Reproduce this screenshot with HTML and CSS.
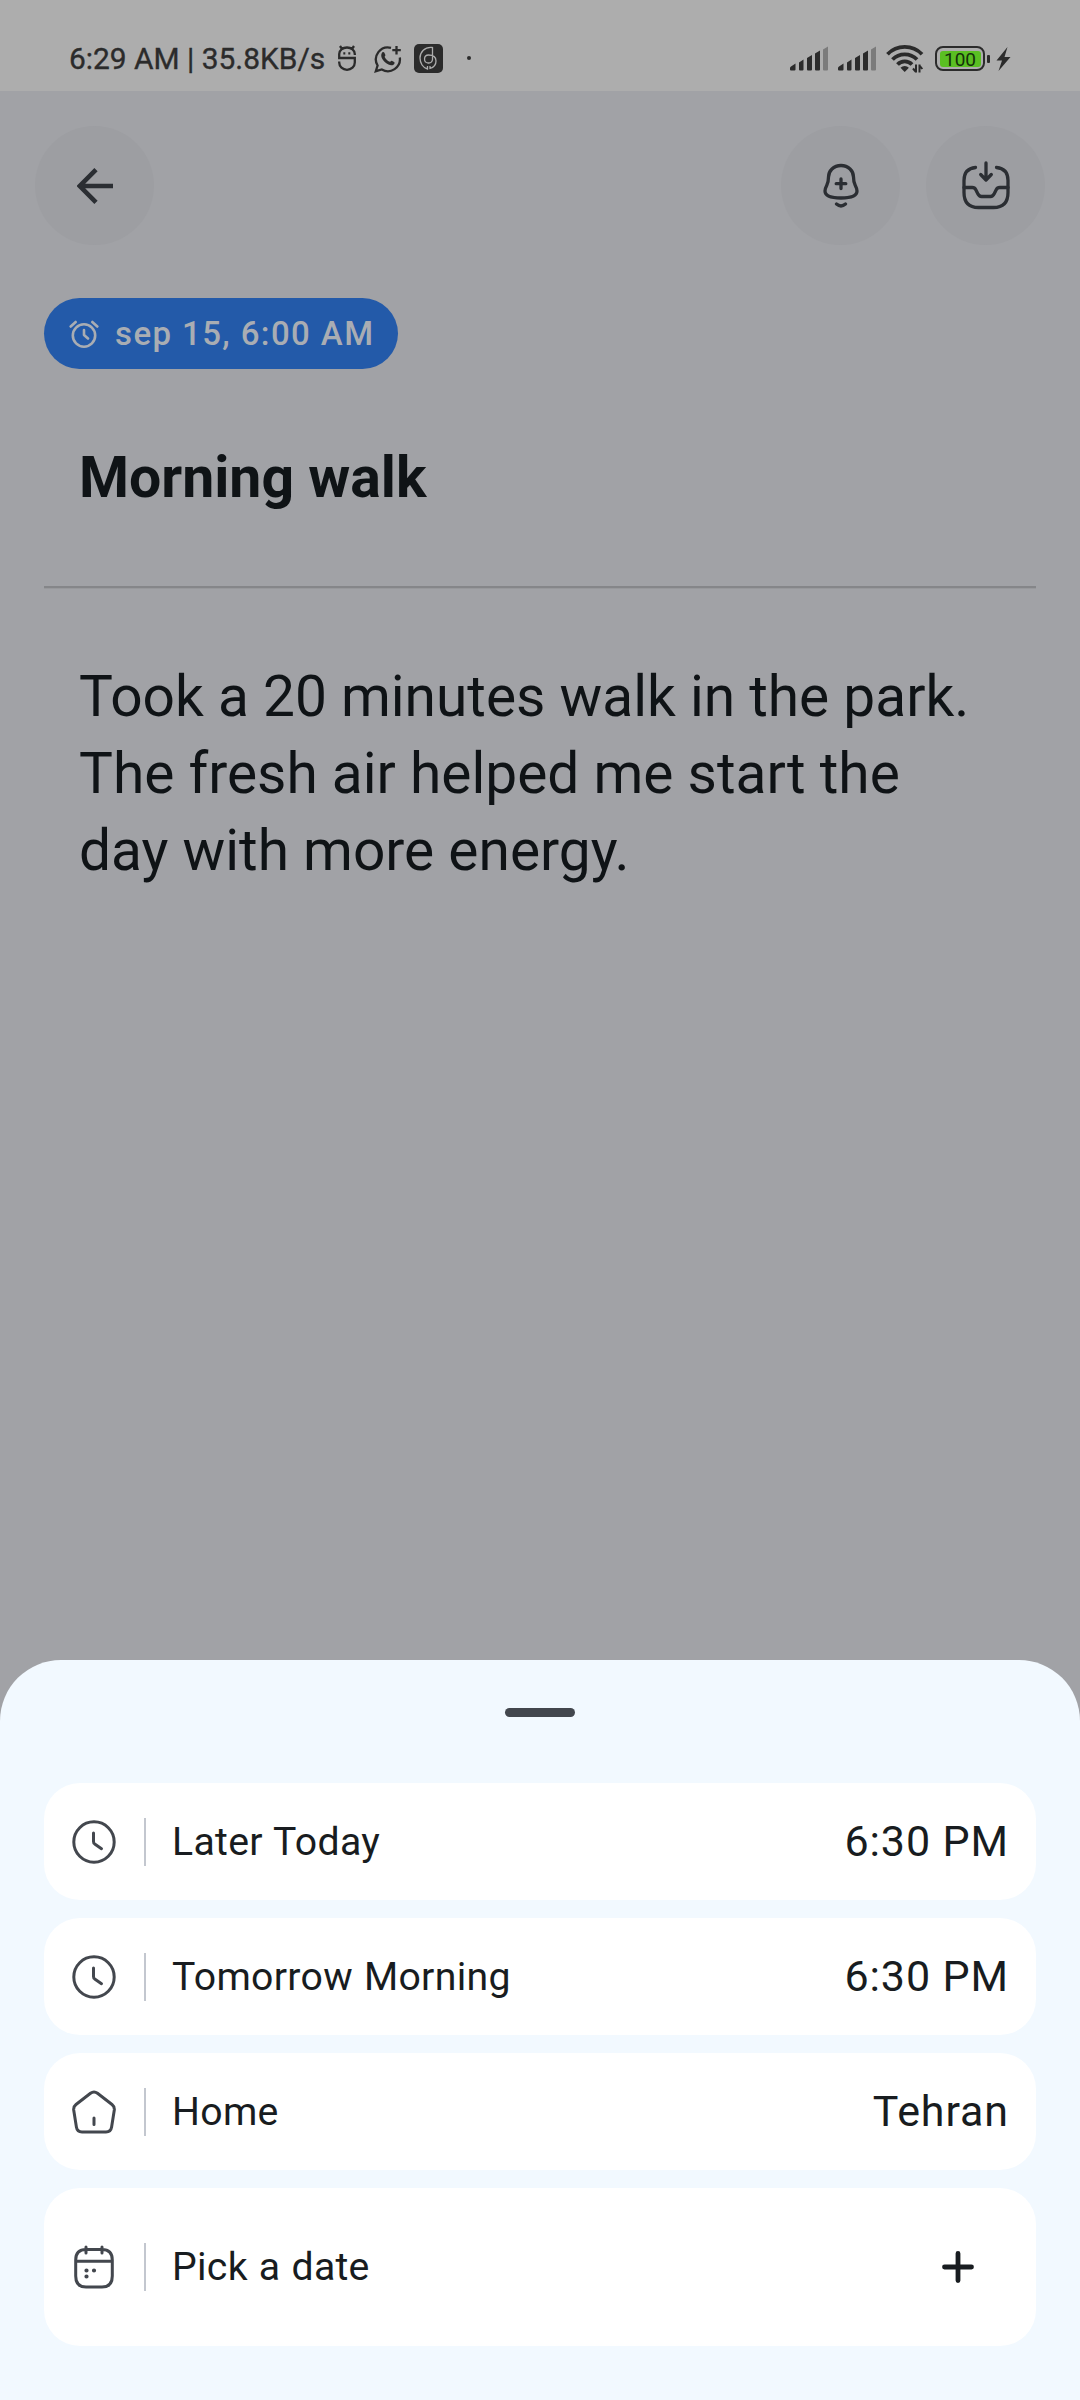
FILE: index.html
```html
<!DOCTYPE html>
<html lang="en">
<head>
<meta charset="utf-8">
<title>Morning walk</title>
<link rel="stylesheet" href="styles.css">
</head>
<body>
<div class="screen">
  <header class="status">
    <span class="status-text">6:29 AM | 35.8KB/s</span>
    <svg class="s-android" width="20" height="28" viewBox="0 0 20 28" fill="none" stroke="#2b2b2b" stroke-width="2.3">
      <path d="M3 2l2 3M17 2l-2 3M17.800 11V10a7.800 6.500 0 0 0-15.600 0v4H17.800v4.500a7.800 7.300 0 0 1-15.600 0v-1"/>
      <path d="M6.300 9.300h2M11.300 9.300h2"/>
    </svg>
    <svg class="s-chat" width="28" height="28" viewBox="0 0 28 28" fill="none" stroke="#2b2b2b" stroke-width="2.3">
      <path d="M17 2.800A12 12 0 0 0 3.600 20.500L1.800 26.200l6-1.700A12 12 0 0 0 25.800 12.500"/>
      <path d="M22.500 1v8.500M18.300 5.200h8.500"/>
      <path d="M8.200 7.500c.8-.8 1.800-.6 2.200.3l1 2.200c.2.700-.9 1.500-.7 2.100 1 2.200 2.700 3.800 5 4.700.7.200 1.400-1.400 2.100-1.100l2.300 1.200c.9.500.5 2-.6 2.800-1.300.9-3.200.8-5-.1-3.200-1.400-5.300-3.600-6.700-6.500-.8-1.900-.8-4.300.4-5.600z" fill="#2b2b2b" stroke="none"/>
    </svg>
    <svg class="s-app" width="29" height="29" viewBox="0 0 29 29" fill="none" stroke="#adadad" stroke-width="1.300">
      <rect width="29" height="29" rx="5" fill="#2b2b2b" stroke="none"/>
      <path d="M18.500 3v12.500a4 4 0 1 1-4-4.500c5 0 7.500 2 7.500 6 0 3.500-2.500 6.500-6 7.500v-2.500M18.500 3.500C10.500 2.500 6 8.500 6 14c0 5 3 10 7.500 11v-3"/>
    </svg>
    <i class="s-dot"></i>
    <span class="spacer"></span>
    <svg class="s-signal" width="38" height="26" viewBox="0 0 38 26" fill="#2b2b2b">
      <path d="M1 20.500l4.500-3V23.500q0 1-1 1H1q-1 0-1-1v-1.500q0-1 1-1.500zM9 16.500l4.500-3v10q0 1-1 1H10q-1 0-1-1zM17 12l5-3v14.500q0 1-1 1h-3q-1 0-1-1zM25 7.500l5-3v19q0 1-1 1h-3q-1 0-1-1z"/>
      <path d="M33 3.500l5-3v23q0 1-1 1h-3q-1 0-1-1z" fill="#7b7b7b"/>
    </svg>
    <svg class="s-signal2" width="38" height="26" viewBox="0 0 38 26" fill="#2b2b2b">
      <path d="M1 20.500l4.500-3V23.500q0 1-1 1H1q-1 0-1-1v-1.500q0-1 1-1.500zM9 16.500l4.500-3v10q0 1-1 1H10q-1 0-1-1zM17 12l5-3v14.500q0 1-1 1h-3q-1 0-1-1zM25 7.500l5-3v19q0 1-1 1h-3q-1 0-1-1z"/>
      <path d="M33 3.500l5-3v23q0 1-1 1h-3q-1 0-1-1z" fill="#7b7b7b"/>
    </svg>
    <svg class="s-wifi" width="38" height="30" viewBox="0 0 38 30" fill="none" stroke="#2b2b2b" stroke-width="3.800">
      <path d="M1.500 10.200a24 24 0 0 1 34.500 0M6.500 15.500a17 17 0 0 1 24.500 0M11.500 20.500a10 10 0 0 1 14.500 0"/>
      <path d="M18.700 28l-4.200-4.200a6 6 0 0 1 8.400 0z" fill="#2b2b2b" stroke="none"/>
      <path d="M30 20.500v8M27 24.500l3 3.500M33.500 28.500v-8M33.500 21.500l2.800 3.500" stroke-width="2"/>
    </svg>
    <div class="battery"><span class="battery-level">100</span></div>
    <i class="battery-tip"></i>
    <svg class="s-bolt" width="15" height="24" viewBox="0 0 15 24" fill="#2b2b2b"><path d="M11.500 0L.5 13.500h5.500L2.500 24 14.500 10H8.500z"/></svg>
  </header>

  <nav class="toolbar">
    <span class="round">
      <svg width="36" height="36" viewBox="0 0 36 36" fill="none" stroke="#2b2e33" stroke-width="4.600"><path d="M36 18H3M19 1.700L2.800 18 19 34.300"/></svg>
    </span>
    <span class="spacer"></span>
    <span class="round">
      <svg width="44" height="48" viewBox="0 0 44 48" fill="none" stroke="#2b2e33" stroke-width="3.300" stroke-linecap="round" stroke-linejoin="round">
        <path d="M22 3.500c-7.500 0-12.500 5.500-12.500 11.500 0 4-.3 5.500-1.700 8.200C6.500 25.700 6 27 6 29c0 4.500 4.500 7 16 7s16-2.500 16-7c0-2-.5-3.300-1.800-5.800-1.400-2.700-1.700-4.200-1.700-8.200 0-6-5-11.500-12.500-11.500z"/>
        <path d="M22 17v9.500M17.200 21.700h9.600M17.500 42c2.800 2.400 6.200 2.400 9 0"/>
      </svg>
    </span>
    <span class="round">
      <svg class="inbox" width="52" height="54" viewBox="0 0 52 54" fill="none" stroke="#2b2e33" stroke-width="3.300" stroke-linecap="round" stroke-linejoin="round">
        <path d="M15.500 10.500C7.500 11.300 4 15.500 4 23.500v12c0 10 4.500 15 14.500 15h15C43.500 50.500 48 45.500 48 35.500V23.500c0-8-3.500-12.200-11.500-13"/>
        <path d="M4 30.500h8.300c1.800 0 2.700.7 3.500 2.300l2 4c.8 1.600 1.800 2.700 3.700 2.700h9c1.900 0 2.900-1.100 3.700-2.700l2-4c.8-1.600 1.700-2.300 3.500-2.300H48M26 6v15.500M20.700 17.500l5.300 5.500 5.300-5.500"/>
      </svg>
    </span>
  </nav>

  <main class="note">
    <div class="chip">
      <svg width="30" height="28" viewBox="0 0 30 28" fill="none" stroke="#a9adb3" stroke-width="2.600" stroke-linecap="round" stroke-linejoin="round">
        <circle cx="15" cy="15.500" r="11.200"/><path d="M15 10v5l4 3.500M1.700 6.500l5-4.500M28.300 6.500l-5-4.500"/>
      </svg>
      <span>sep 15, 6:00 AM</span>
    </div>
    <h1 class="title">Morning walk</h1>
    <p class="body">Took a 20 minutes walk in the park. The fresh air helped me start the day with more energy.</p>
  </main>

  <section class="sheet">
    <i class="handle"></i>
    <div class="row">
      <svg class="icon" width="44" height="44" viewBox="0 0 44 44"><circle cx="22" cy="22" r="20.200"/><path d="M21.500 13v8.500q0 1.500 1.200 2.400l6.800 4.800"/></svg>
      <i class="rule"></i><span class="label">Later Today</span><span class="value">6:30 PM</span>
    </div>
    <div class="row">
      <svg class="icon" width="44" height="44" viewBox="0 0 44 44"><circle cx="22" cy="22" r="20.200"/><path d="M21.500 13v8.500q0 1.500 1.200 2.400l6.800 4.800"/></svg>
      <i class="rule"></i><span class="label">Tomorrow Morning</span><span class="value">6:30 PM</span>
    </div>
    <div class="row">
      <svg class="icon" width="44" height="44" viewBox="0 0 44 44"><path d="M18.500 3.300q3.500-2.600 7 0l14.500 11.200q2.700 2.200 2.300 5.500L39.600 37q-.8 5-5.600 5H10q-4.800 0-5.600-5L1.700 20q-.4-3.300 2.300-5.500zM22 28v6.500"/></svg>
      <i class="rule"></i><span class="label">Home</span><span class="value">Tehran</span>
    </div>
    <div class="row tall">
      <svg class="icon" width="44" height="44" viewBox="0 0 44 44"><path d="M14 4.500h16c7.500 0 10.300 4 10.300 10.500v16c0 7.500-3.300 11-10.300 11H14C7 42 3.700 38.500 3.700 31V15C3.700 8.500 6.500 4.500 14 4.500zM3.700 16.200h36.600M14 2v6M30 2v6"/><path d="M14.500 25.500h.01M22 25.500h.01M14.500 31.500h.01" stroke-width="4.200"/></svg>
      <i class="rule"></i><span class="label">Pick a date</span>
      <svg class="plus" width="32" height="32" viewBox="0 0 32 32"><path d="M16 2.500v27M2.500 16h27"/></svg>
    </div>
  </section>
</div>
</body>
</html>
```
FILE: styles.css
```css
* { box-sizing: border-box; }

body {
  margin: 0;
  font-family: Roboto, "Liberation Sans", sans-serif;
}

svg { display: block; flex: none; }

.screen {
  width: 1080px;
  height: 2400px;
  display: flex;
  flex-direction: column;
  background: #a1a2a6;
  overflow: hidden;
}

.spacer { flex: 1; }

/* status bar */
.status {
  height: 91px;
  padding: 27px 69px 0 69px;
  display: flex;
  align-items: center;
  background: #adadad;
  color: #2b2b2b;
}
.status-text {
  width: 268px;
  font-size: 29.9px;
  font-weight: 400;
  line-height: 34px;
  white-space: nowrap;
  -webkit-text-stroke: 0.35px #2b2b2b;
}
.s-android { margin-top: -2px; }
.s-chat { margin: -1px 0 0 17px; }
.s-app { margin: -1px 0 0 12px; }
.s-dot {
  width: 4px;
  height: 4px;
  margin: -2px 0 0 24px;
  border-radius: 50%;
  background: #2b2b2b;
}
.s-signal2 { margin-left: 10px; }
.s-wifi { margin: 0 11px 0 10px; }
.battery {
  width: 50px;
  height: 25px;
  margin-top: -1px;
  padding: 2.5px;
  border: 2.500px solid #2b2b2b;
  border-radius: 8px;
}
.battery-level {
  display: block;
  height: 16px;
  border-radius: 3px;
  background: #5abf22;
  color: #14300a;
  font-size: 19px;
  line-height: 17px;
  text-align: center;
}
.battery-tip {
  width: 3px;
  height: 8px;
  margin: -1px 6px 0 2px;
  border-radius: 1px;
  background: #2b2b2b;
}

/* top actions */
.toolbar {
  display: flex;
  gap: 26px;
  padding: 35px 35px 0;
}
.round {
  width: 119px;
  height: 119px;
  display: flex;
  align-items: center;
  justify-content: center;
  border-radius: 50%;
  background: #9d9ea2;
}
.inbox { margin-bottom: 3px; }

/* note */
.note {
  flex: 1;
  padding: 53px 44px 0;
}
.chip {
  width: 354px;
  height: 71px;
  padding-left: 25px;
  display: flex;
  align-items: center;
  gap: 16px;
  border-radius: 36px;
  background: #235aa9;
  color: #a9adb3;
  font-size: 33px;
  font-weight: 500;
  letter-spacing: 1.4px;
  white-space: nowrap;
}
.title {
  height: 219px;
  margin: 0;
  padding: 74px 35px 0;
  border-bottom: 2px solid #858689;
  box-shadow: 0 1px #98999c;
  color: #0f1316;
  font-size: 57.15px;
  font-weight: 700;
  line-height: 70px;
}
.body {
  margin: 0;
  padding: 70px 35px 0;
  color: #0f1316;
  font-size: 56.85px;
  line-height: 77px;
}

/* bottom sheet */
.sheet {
  height: 740px;
  padding: 48px 44px 0;
  display: flex;
  flex-direction: column;
  gap: 18px;
  border-radius: 61px 61px 0 0;
  background: #f2f9ff;
}
.handle {
  width: 70px;
  height: 9px;
  margin: 0 auto 48px;
  border-radius: 5px;
  background: #43474e;
}
.row {
  height: 117px;
  padding: 0 27px 0 28px;
  display: flex;
  align-items: center;
  border-radius: 36px;
  background: #fff;
  color: #181c20;
}
.tall {
  height: 158px;
  padding-right: 62px;
}
.icon, .plus {
  fill: none;
  stroke: #43474e;
  stroke-width: 3;
  stroke-linecap: round;
  stroke-linejoin: round;
}
.plus {
  stroke: #181c20;
  stroke-width: 4.800;
}
.rule {
  width: 2px;
  height: 48px;
  margin: 0 26px 0 28px;
  background: #c3c7cf;
}
.label {
  flex: 1;
  font-size: 39.2px;
  letter-spacing: 0.300px;
  word-spacing: 1px;
}
.value {
  margin-top: -2px;
  font-size: 43px;
  letter-spacing: 0.900px;
}
```
